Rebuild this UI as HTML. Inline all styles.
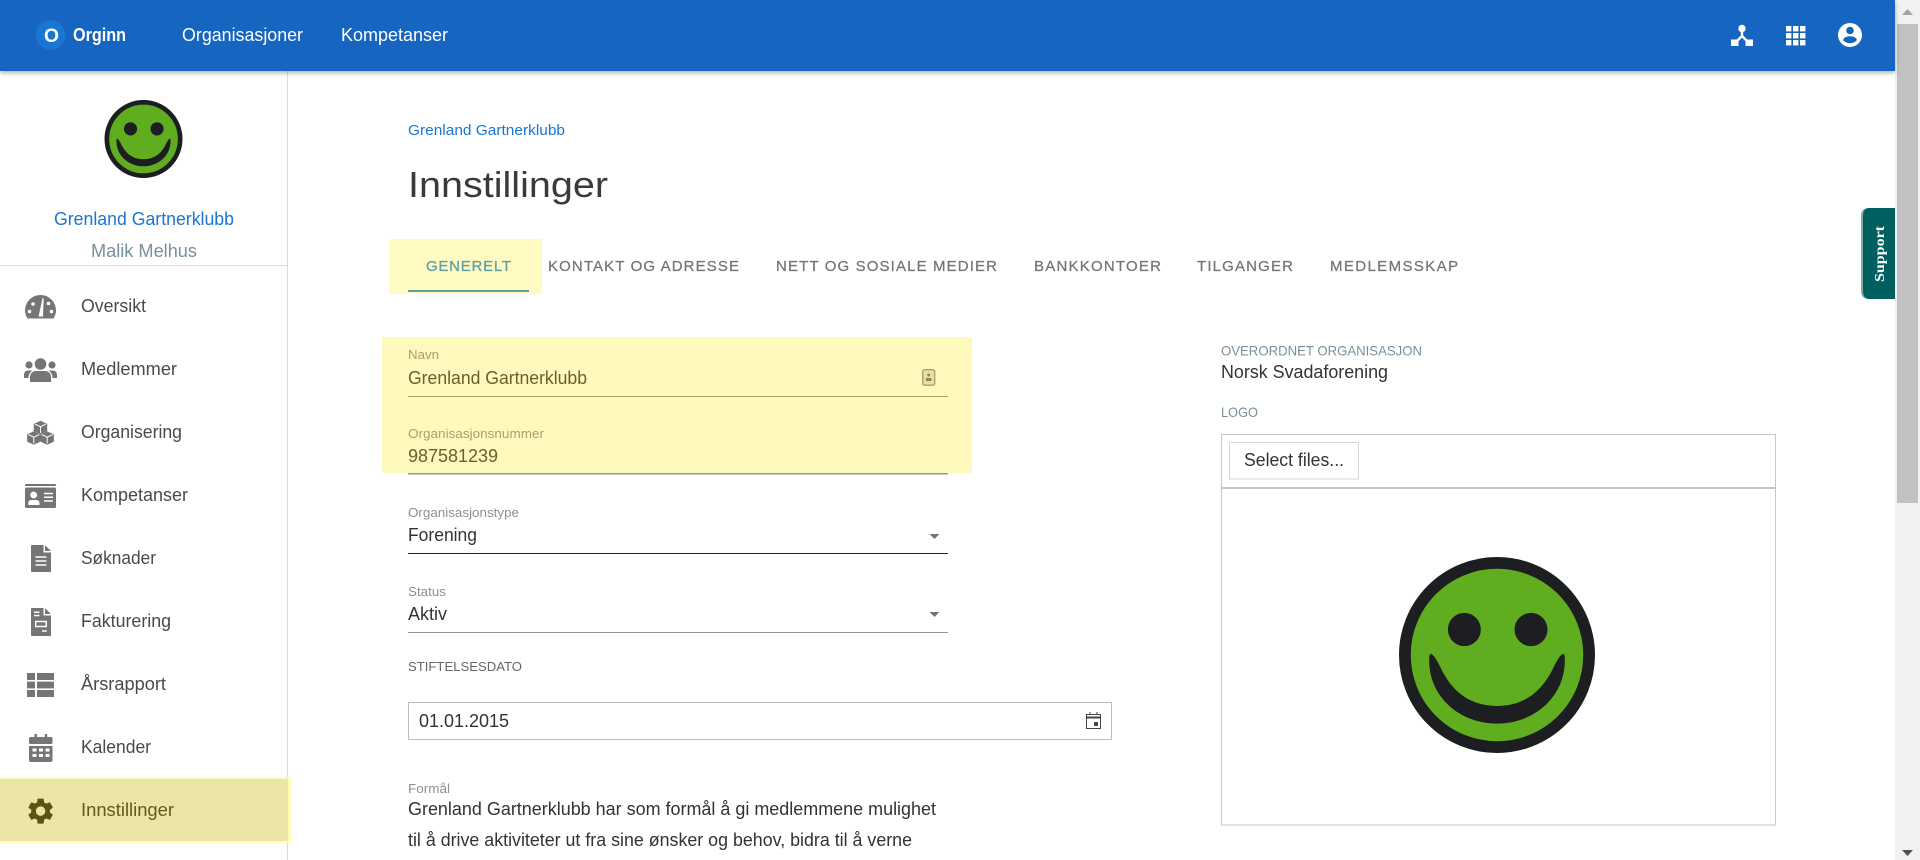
<!DOCTYPE html>
<html lang="no">
<head>
<meta charset="utf-8">
<title>Innstillinger</title>
<style>
html,body{margin:0;padding:0;width:1920px;height:860px;overflow:hidden;background:#fff}
svg{display:block;position:absolute;left:0;top:0}
text{font-family:"Liberation Sans",Arial,sans-serif;white-space:pre}
.nav{font-size:18px;fill:#4a4a4a}
.ic{fill:#757575}
.tab{font-size:15px;fill:#757575;stroke:#757575;stroke-width:.25}
.lab{font-size:13px;fill:#8f8f8f}
.val{font-size:18px;fill:#333}
</style>
</head>
<body>
<svg width="1920" height="860" viewBox="0 0 1920 860" xmlns="http://www.w3.org/2000/svg">
<defs>
<filter id="sh" x="-2%" y="-20%" width="104%" height="150%"><feDropShadow dx="0" dy="2" stdDeviation="2.5" flood-color="#000" flood-opacity=".3"/></filter>
<g id="smile">
<ellipse cx="100" cy="100" rx="94" ry="94" fill="#60ad20" stroke="#1c1e21" stroke-width="12"/>
<ellipse cx="66.7" cy="74" rx="16.8" ry="17" fill="#1c1e21"/>
<ellipse cx="134.7" cy="74" rx="16.8" ry="17" fill="#1c1e21"/>
<path d="M31 101C32 96 36 100 42 112C55 140 75 152 100 152C125 152 145 140 158 112C164 100 168 96 169 101C172 140 140 170 100 170C60 170 28 140 31 101Z" fill="#1c1e21"/>
</g>
<g id="hex">
<path d="M0-6.7L6.7-3.6V3.6L0 6.7-6.7 3.6V-3.6Z" fill="#757575"/>
<path d="M-5.5-3.4L0-.8 5.5-3.4M0-.8V5.5" fill="none" stroke="#fff" stroke-width="1"/>
</g>
</defs>

<!-- scrollbar -->
<rect x="1895" y="0" width="25" height="860" fill="#f1f1f1"/>
<rect x="1897" y="24" width="21" height="479" fill="#c1c1c1"/>
<path d="M1902 15L1907.5 9 1913 15Z" fill="#a3a3a3"/>
<path d="M1902 850L1913 850 1907.5 856Z" fill="#505050"/>

<!-- sidebar -->
<rect x="287" y="71" width="1" height="789" fill="#dcdcdc"/>
<rect x="0" y="265" width="287" height="1" fill="#dcdcdc"/>
<use href="#smile" transform="translate(104.5 100) scale(.39)"/>
<text x="54" y="225" font-size="18" fill="#1976d2" textLength="180" lengthAdjust="spacingAndGlyphs">Grenland Gartnerklubb</text>
<text x="91" y="257" font-size="18" fill="#78909c" textLength="106" lengthAdjust="spacingAndGlyphs">Malik Melhus</text>

<!-- nav highlight -->
<rect x="0" y="777" width="291" height="66" fill="#fff9ba"/>
<rect x="0" y="779" width="288" height="62" fill="#ebe6a8"/>

<text class="nav" x="81" y="312" textLength="65" lengthAdjust="spacingAndGlyphs">Oversikt</text>
<text class="nav" x="81" y="375" textLength="96" lengthAdjust="spacingAndGlyphs">Medlemmer</text>
<text class="nav" x="81" y="438" textLength="101" lengthAdjust="spacingAndGlyphs">Organisering</text>
<text class="nav" x="81" y="501" textLength="107" lengthAdjust="spacingAndGlyphs">Kompetanser</text>
<text class="nav" x="81" y="564" textLength="75" lengthAdjust="spacingAndGlyphs">Søknader</text>
<text class="nav" x="81" y="627" textLength="90" lengthAdjust="spacingAndGlyphs">Fakturering</text>
<text class="nav" x="81" y="690" textLength="85" lengthAdjust="spacingAndGlyphs">Årsrapport</text>
<text class="nav" x="81" y="753" textLength="70" lengthAdjust="spacingAndGlyphs">Kalender</text>
<text class="nav" x="81" y="816" textLength="93" lengthAdjust="spacingAndGlyphs" style="fill:#5f5b1e">Innstillinger</text>

<!-- nav icons -->
<!-- gauge -->
<path class="ic" d="M27.5 318.5C25.8 315.5 25 313 25 310.5A15.5 15.5 0 0 1 56 310.5C56 313 55.2 315.5 53.5 318.5Z"/>
<g fill="#fff"><circle cx="29.5" cy="311.5" r="1.8"/><circle cx="33" cy="304" r="1.8"/><circle cx="48.5" cy="303.5" r="1.8"/><circle cx="51.5" cy="311.5" r="1.8"/><path d="M42.5 298L43.7 298.4 43 316.5H38.6Z"/></g>
<!-- users -->
<g class="ic"><circle cx="40.5" cy="364" r="5.8"/><circle cx="29" cy="365" r="3.6"/><circle cx="52" cy="365" r="3.6"/>
<path d="M30 382V377C30 373 33 371 36 371H45C48 371 51 373 51 377V382Z"/>
<path d="M24 378V375C24 372 26 370.5 28 370.5H32.5C29.5 372.5 28.5 375 28.5 378ZM57 378V375C57 372 55 370.5 53 370.5H48.5C51.5 372.5 52.5 375 52.5 378Z"/></g>
<!-- cubes -->
<use href="#hex" x="40.5" y="427.5"/><use href="#hex" x="33.8" y="438"/><use href="#hex" x="47.2" y="438"/>
<!-- id card -->
<rect class="ic" x="25" y="484" width="31" height="2" rx=".8"/>
<rect class="ic" x="25" y="487.5" width="31" height="20.5" rx="1.5"/>
<circle cx="33.7" cy="495" r="3.4" fill="#fff"/><path d="M28.3 505V503C28.3 500.8 30 500 31.5 500H36C37.5 500 39.5 500.8 39.5 503V505Z" fill="#fff"/>
<path d="M44 493.5H53M44 497.3H53M44 501H53" stroke="#fff" stroke-width="1.5"/>
<!-- file -->
<path class="ic" d="M31 546Q31 545 32 545H43.5V552.5H51V571Q51 572 50 572H32Q31 572 31 571Z"/><path class="ic" d="M45 545.3L51 551H45Z"/>
<path d="M35.5 557H46.5M35.5 561H46.5M35.5 565H46.5" stroke="#fff" stroke-width="1.6"/>
<!-- invoice -->
<path class="ic" d="M31 609Q31 608 32 608H43.5V615.5H51V635Q51 636 50 636H32Q31 636 31 635Z"/><path class="ic" d="M45 608.3L51 614H45Z"/>
<path d="M34 612.3H39.5M34 615.5H39.5M42 631H46.7" stroke="#fff" stroke-width="1.5"/>
<rect x="35.7" y="621.5" width="10.5" height="5" fill="none" stroke="#fff" stroke-width="1.5"/>
<!-- list -->
<g class="ic"><rect x="27" y="673" width="8" height="7"/><rect x="37" y="673" width="17" height="7"/><rect x="27" y="681.6" width="8" height="6.8"/><rect x="37" y="681.6" width="17" height="6.8"/><rect x="27" y="690" width="8" height="7"/><rect x="37" y="690" width="17" height="7"/></g>
<!-- calendar -->
<g class="ic"><rect x="29" y="737" width="23.5" height="7" rx="1.5"/><rect x="34.5" y="734" width="2.4" height="5"/><rect x="44.8" y="734" width="2.4" height="5"/><path d="M29 746H52.5V760Q52.5 762 50.5 762H31Q29 762 29 760Z"/></g>
<g fill="#fff"><rect x="32.5" y="748.5" width="4" height="3"/><rect x="39" y="748.5" width="4" height="3"/><rect x="45.5" y="748.5" width="4" height="3"/><rect x="32.5" y="754" width="4" height="3"/><rect x="39" y="754" width="4" height="3"/><rect x="45.5" y="754" width="4" height="3"/></g>
<!-- gear -->
<path fill="#5a5413" transform="translate(25 795.5) scale(1.3)" d="M19.14 12.94c.04-.3.06-.61.06-.94 0-.32-.02-.64-.07-.94l2.03-1.58c.18-.14.23-.41.12-.61l-1.92-3.32c-.12-.22-.37-.29-.59-.22l-2.39.96c-.5-.38-1.03-.7-1.62-.94l-.36-2.54c-.04-.24-.24-.41-.48-.41h-3.84c-.24 0-.43.17-.47.41l-.36 2.54c-.59.24-1.13.57-1.62.94l-2.39-.96c-.22-.08-.47 0-.59.22L2.74 8.87c-.12.21-.08.47.12.61l2.03 1.58c-.05.3-.09.63-.09.94s.02.64.07.94l-2.03 1.58c-.18.14-.23.41-.12.61l1.92 3.32c.12.22.37.29.59.22l2.39-.96c.5.38 1.03.7 1.62.94l.36 2.54c.05.24.24.41.48.41h3.84c.24 0 .44-.17.47-.41l.36-2.54c.59-.24 1.13-.56 1.62-.94l2.39.96c.22.08.47 0 .59-.22l1.92-3.32c.12-.22.07-.47-.12-.61l-2.01-1.58zM12 15.6c-1.98 0-3.6-1.62-3.6-3.6s1.62-3.6 3.6-3.6 3.6 1.62 3.6 3.6-1.62 3.6-3.6 3.6z"/>

<!-- page head -->
<text x="408" y="135" font-size="15" fill="#1976d2" textLength="157" lengthAdjust="spacingAndGlyphs">Grenland Gartnerklubb</text>
<text x="408" y="197" font-size="36" fill="#3a3a3a" textLength="200" lengthAdjust="spacingAndGlyphs">Innstillinger</text>

<!-- tabs -->
<rect x="389" y="239" width="153" height="55" fill="#fff9c2"/>
<rect x="408" y="290" width="121" height="2" fill="#5f9ea0"/>
<text class="tab" x="426" y="271" textLength="85" style="fill:#5f9ea0;stroke:#5f9ea0">GENERELT</text>
<text class="tab" x="548" y="271" textLength="191">KONTAKT OG ADRESSE</text>
<text class="tab" x="776" y="271" textLength="221">NETT OG SOSIALE MEDIER</text>
<text class="tab" x="1034" y="271" textLength="127">BANKKONTOER</text>
<text class="tab" x="1197" y="271" textLength="96">TILGANGER</text>
<text class="tab" x="1330" y="271" textLength="128">MEDLEMSSKAP</text>

<!-- form yellow -->
<rect x="408" y="473" width="540" height="1.5" fill="#949494"/>
<rect x="382" y="337" width="590" height="136" fill="#fff9bd"/>
<rect x="408" y="396" width="540" height="1" fill="#a8a366"/>

<text class="lab" x="408" y="359" textLength="31" lengthAdjust="spacingAndGlyphs" style="fill:#a5a26e">Navn</text>
<text class="val" x="408" y="384" textLength="179" lengthAdjust="spacingAndGlyphs" style="fill:#66622a">Grenland Gartnerklubb</text>
<rect x="922.7" y="369.7" width="12" height="15.5" rx="2" fill="#e6e1a6" stroke="#a8a366" stroke-width="1.4"/>
<circle cx="928.7" cy="375" r="1.5" fill="#8c8850"/><rect x="926" y="378" width="5.4" height="3" fill="#8c8850"/>

<text class="lab" x="408" y="438" textLength="136" lengthAdjust="spacingAndGlyphs" style="fill:#a5a26e">Organisasjonsnummer</text>
<text class="val" x="408" y="462" textLength="90" lengthAdjust="spacingAndGlyphs" style="fill:#66622a">987581239</text>

<text class="lab" x="408" y="517" textLength="111" lengthAdjust="spacingAndGlyphs">Organisasjonstype</text>
<text class="val" x="408" y="541" textLength="69" lengthAdjust="spacingAndGlyphs">Forening</text>
<path d="M929.5 534H939.5L934.5 539Z" fill="#757575"/>
<rect x="408" y="553" width="540" height="1" fill="#222"/>

<text class="lab" x="408" y="596" textLength="38" lengthAdjust="spacingAndGlyphs">Status</text>
<text class="val" x="408" y="620" textLength="39" lengthAdjust="spacingAndGlyphs">Aktiv</text>
<path d="M929.5 612H939.5L934.5 617Z" fill="#757575"/>
<rect x="408" y="632" width="540" height="1" fill="#949494"/>

<text class="lab" x="408" y="671" textLength="114" lengthAdjust="spacingAndGlyphs" style="fill:#666">STIFTELSESDATO</text>
<rect x="408.5" y="702.5" width="703" height="37" fill="#fff" stroke="#bdbdbd"/>
<text class="val" x="419" y="727" textLength="90" lengthAdjust="spacingAndGlyphs">01.01.2015</text>
<g fill="none" stroke="#444"><rect x="1086.5" y="714.5" width="14" height="14"/></g>
<path d="M1086.5 717.5H1100.5" stroke="#444" stroke-width="2"/><path d="M1090 712V715M1097 712V715" stroke="#444"/><rect x="1094" y="722" width="4" height="4" fill="#444"/>

<text class="lab" x="408" y="793" textLength="42" lengthAdjust="spacingAndGlyphs">Formål</text>
<text class="val" x="408" y="815" textLength="528" lengthAdjust="spacingAndGlyphs">Grenland Gartnerklubb har som formål å gi medlemmene mulighet</text>
<text class="val" x="408" y="846" textLength="504" lengthAdjust="spacingAndGlyphs">til å drive aktiviteter ut fra sine ønsker og behov, bidra til å verne</text>

<!-- right column -->
<text x="1221" y="355.5" font-size="14" fill="#78909c" textLength="201" lengthAdjust="spacingAndGlyphs">OVERORDNET ORGANISASJON</text>
<text class="val" x="1221" y="378" textLength="167" lengthAdjust="spacingAndGlyphs">Norsk Svadaforening</text>
<text x="1221" y="417" font-size="14" fill="#78909c" textLength="37" lengthAdjust="spacingAndGlyphs">LOGO</text>
<rect x="1221.5" y="434.5" width="554" height="390.5" fill="#fff" stroke="#c6c6c6"/>
<rect x="1222" y="487" width="553" height="2" fill="#c6c6c6"/>
<rect x="1229.5" y="442.5" width="129" height="36.5" fill="#fff" stroke="#cfd8dc"/>
<text class="val" x="1244" y="466" textLength="100" lengthAdjust="spacingAndGlyphs">Select files...</text>
<use href="#smile" transform="translate(1399 557) scale(.98)"/>

<!-- support -->
<path d="M1895 208H1869Q1861 208 1861 216V291Q1861 299 1869 299H1895Z" fill="#7fa8a8"/>
<path d="M1895 208H1870Q1863 208 1863 216V291Q1863 299 1870 299H1895Z" fill="#005f5f"/>
<text transform="translate(1884 282) rotate(-90)" font-size="14" font-weight="700" fill="#fff" textLength="56" lengthAdjust="spacingAndGlyphs" style="font-family:'Liberation Serif',serif">Support</text>

<!-- header -->
<rect x="0" y="0" width="1895" height="71" fill="#1565c0" filter="url(#sh)"/>
<circle cx="50.5" cy="35" r="14.8" fill="#1976d2"/>
<text x="44" y="42" font-size="19" font-weight="700" fill="#fff" textLength="15" lengthAdjust="spacingAndGlyphs">O</text>
<text x="73" y="41" font-size="18" font-weight="700" fill="#fff" textLength="53" lengthAdjust="spacingAndGlyphs">Orginn</text>
<text x="182" y="41" font-size="18" fill="#fff" textLength="121" lengthAdjust="spacingAndGlyphs">Organisasjoner</text>
<text x="341" y="41" font-size="18" fill="#fff" textLength="107" lengthAdjust="spacingAndGlyphs">Kompetanser</text>
<!-- hub -->
<circle cx="1742" cy="28.5" r="3.7" fill="#fff"/>
<path d="M1742 30V37M1742 36L1736 42M1742 36L1748 42" stroke="#fff" stroke-width="2.4" fill="none"/>
<rect x="1731" y="39.5" width="7.5" height="6.5" fill="#fff"/><rect x="1745.5" y="39.5" width="7.5" height="6.5" fill="#fff"/>
<!-- apps -->
<g fill="#fff"><rect x="1786" y="26" width="5.4" height="5.4"/><rect x="1793" y="26" width="5.4" height="5.4"/><rect x="1800" y="26" width="5.4" height="5.4"/><rect x="1786" y="33" width="5.4" height="5.4"/><rect x="1793" y="33" width="5.4" height="5.4"/><rect x="1800" y="33" width="5.4" height="5.4"/><rect x="1786" y="40" width="5.4" height="5.4"/><rect x="1793" y="40" width="5.4" height="5.4"/><rect x="1800" y="40" width="5.4" height="5.4"/></g>
<!-- account -->
<circle cx="1850" cy="35" r="12" fill="#fff"/>
<circle cx="1850" cy="30.5" r="3.8" fill="#1565c0"/>
<path d="M1843.2 40.2C1843.2 37.6 1847 36.3 1850 36.3S1856.8 37.6 1856.8 40.2C1855 42.2 1852.7 43.2 1850 43.2S1845 42.2 1843.2 40.2Z" fill="#1565c0"/>
</svg>
</body>
</html>
